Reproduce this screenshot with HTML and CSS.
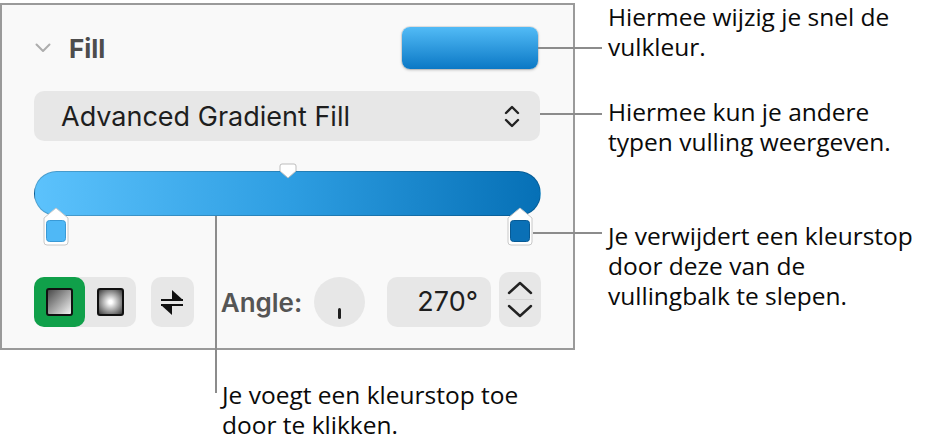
FILE: index.html
```html
<!DOCTYPE html>
<html lang="nl">
<head>
  <meta charset="utf-8">
  <title>Vulling</title>
  <link rel="stylesheet" href="styles.css">
</head>
<body>
  <div class="page">
    <div class="left">
      <div class="panel">
        <div class="fill-head">
          <div class="fill-title">
            <svg class="chev-down" width="16" height="10" viewBox="0 0 16 10"><path d="M1.5 1.5 L8 8 L14.5 1.5" fill="none" stroke="#adadad" stroke-width="2" stroke-linecap="round" stroke-linejoin="round"/></svg>
            <span>Fill</span>
          </div>
          <div class="swatch"></div>
        </div>

        <div class="popup">
          <span>Advanced Gradient Fill</span>
          <svg width="16" height="23" viewBox="0 0 16 23"><path d="M2 8 L8 2 L14 8 M2 15 L8 21 L14 15" fill="none" stroke="#222" stroke-width="2.4" stroke-linecap="round" stroke-linejoin="round"/></svg>
        </div>

        <div class="gradient">
          <div class="bar"></div>
          <svg class="midpoint" width="18" height="16" viewBox="0 0 18 16"><path d="M3 1 H15 Q17 1 17 3 V8 L9 15 L1 8 V3 Q1 1 3 1 Z" fill="#fff" stroke="#bdbdbd" stroke-width="1"/></svg>
          <svg class="stop stop-left" width="26" height="39" viewBox="0 0 26 39"><path d="M13 1 L25 11 V35 Q25 38 22 38 H4 Q1 38 1 35 V11 Z" fill="#fff" stroke="#c8c8c8"/><rect x="3.5" y="13.5" width="19" height="21" rx="3" fill="#4fb8f6" stroke="#3a9ad6"/></svg>
          <svg class="stop stop-right" width="26" height="39" viewBox="0 0 26 39"><path d="M13 1 L25 11 V35 Q25 38 22 38 H4 Q1 38 1 35 V11 Z" fill="#fff" stroke="#c8c8c8"/><rect x="3.5" y="13.5" width="19" height="21" rx="3" fill="#0a70b6" stroke="#085a94"/></svg>
        </div>

        <div class="controls">
          <div class="segment">
            <div class="seg seg-on"><span class="sq sq-linear"></span></div>
            <div class="seg"><span class="sq sq-radial"></span></div>
          </div>
          <div class="swap">
            <svg width="26" height="28" viewBox="0 0 26 28"><path d="M2 12 H24" stroke="#111" stroke-width="2"/><path d="M13 2 V12 H24 Z" fill="#111"/><path d="M2 17 H24" stroke="#111" stroke-width="2"/><path d="M13 27 V17 H2 Z" fill="#111"/></svg>
          </div>
          <span class="angle-label">Angle:</span>
          <div class="dial"><span class="tick"></span></div>
          <div class="value">270°</div>
          <div class="stepper">
            <svg width="42" height="55" viewBox="0 0 42 55"><path d="M10 21 L21 11 L32 21" fill="none" stroke="#222" stroke-width="2.4" stroke-linecap="round" stroke-linejoin="round"/><path d="M7 27.5 H35" stroke="#d6d6d6" stroke-width="1"/><path d="M10 34 L21 44 L32 34" fill="none" stroke="#222" stroke-width="2.4" stroke-linecap="round" stroke-linejoin="round"/></svg>
          </div>
        </div>
      </div>
      <p class="note note-bottom">Je voegt een kleurstop toe<br>door te klikken.</p>
    </div>

    <div class="notes">
      <p class="note note-1">Hiermee wijzig je snel de<br>vulkleur.</p>
      <p class="note note-2">Hiermee kun je andere<br>typen vulling weergeven.</p>
      <p class="note note-3">Je verwijdert een kleurstop<br>door deze van de<br>vullingbalk te slepen.</p>
    </div>

    <span class="leader leader-swatch"></span>
    <span class="leader leader-popup"></span>
    <span class="leader leader-stop"></span>
    <span class="leader leader-add"></span>
  </div>
</body>
</html>
```

FILE: styles.css
```css
body {
  margin: 0;
  background: #fff;
}
.page {
  position: relative;
  display: flex;
  width: 944px;
  height: 447px;
  overflow: hidden;
}
.left {
  width: 575px;
  flex: none;
}
.panel {
  box-sizing: border-box;
  width: 575px;
  height: 347px;
  margin-top: 3px;
  padding: 22px 32px 21px 32px;
  border: 2px solid #9a9a9a;
  background: #f9f9f9;
  font-family: Inter, "Liberation Sans", sans-serif;
  color: #1e1e1e;
  display: flex;
  flex-direction: column;
}

/* header */
.fill-head {
  height: 42px;
  display: flex;
  align-items: center;
  justify-content: space-between;
}
.fill-title {
  display: flex;
  align-items: center;
  font-size: 26px;
  font-weight: 700;
  color: #4d4d4d;
}
.chev-down {
  margin-left: 1px;
  margin-right: 18px;
}
.swatch {
  width: 136px;
  height: 42px;
  margin-right: 3px;
  border-radius: 8px;
  background: linear-gradient(to bottom, #52bbf6, #0b78c5);
  box-shadow: 0 0 0 1px rgba(0, 0, 0, 0.08), 0 1px 3px rgba(0, 0, 0, 0.25);
}

/* popup */
.popup {
  margin-top: 22px;
  margin-right: 1px;
  height: 50px;
  padding: 0 20px 0 27px;
  border-radius: 10px;
  background: #e7e7e7;
  display: flex;
  align-items: center;
  justify-content: space-between;
  font-size: 27px;
}

/* gradient bar */
.gradient {
  position: relative;
  margin-top: 22px;
  height: 82px;
}
.bar {
  margin-top: 8px;
  height: 45px;
  width: 507px;
  box-sizing: border-box;
  border-radius: 23px;
  border: 1px solid rgba(0, 0, 0, 0.18);
  background: linear-gradient(to right, #5cc2fc, #2e9ee2 50%, #0670b6);
}
.midpoint {
  position: absolute;
  left: 245px;
  top: 0;
}
.stop {
  position: absolute;
  top: 44px;
}
.stop-left {
  left: 9px;
}
.stop-right {
  left: 473px;
}

/* bottom controls */
.controls {
  margin-top: 32px;
  height: 50px;
  display: flex;
  align-items: flex-end;
}
.segment {
  display: flex;
  width: 103px;
  height: 50px;
  border-radius: 10px;
  background: #e7e7e7;
}
.seg {
  width: 51px;
  height: 50px;
  border-radius: 10px;
  display: flex;
  align-items: center;
  justify-content: center;
}
.seg-on {
  background: #10a04a;
}
.sq {
  box-sizing: border-box;
  width: 27px;
  height: 28px;
  border: 2.5px solid #111;
  border-radius: 3px;
}
.sq-linear {
  background: linear-gradient(135deg, #4a4a4a, #f4f4f4);
}
.sq-radial {
  background: radial-gradient(circle, #fff 10%, #3c3c3c 100%);
}
.swap {
  margin-left: 15px;
  width: 43px;
  height: 50px;
  border-radius: 10px;
  background: #e7e7e7;
  display: flex;
  align-items: center;
  justify-content: center;
}
.angle-label {
  margin-left: 27px;
  align-self: center;
  font-size: 26px;
  font-weight: 600;
  color: #555;
}
.dial {
  position: relative;
  margin-left: 12px;
  width: 51px;
  height: 50px;
  border-radius: 50%;
  background: #e7e7e7;
}
.tick {
  position: absolute;
  left: 24px;
  top: 31px;
  width: 3px;
  height: 11px;
  border-radius: 2px;
  background: #1e1e1e;
}
.value {
  box-sizing: border-box;
  margin-left: 22px;
  width: 105px;
  height: 50px;
  padding-right: 13px;
  border-radius: 10px;
  background: #e7e7e7;
  font-size: 27px;
  line-height: 50px;
  text-align: right;
}
.stepper {
  margin-left: 8px;
  width: 42px;
  height: 55px;
  border-radius: 10px;
  background: #e7e7e7;
}
.stepper svg {
  display: block;
}

/* callouts */
.notes {
  padding-left: 33px;
}
.note {
  margin: 0;
  font-family: "Open Sans", "Noto Sans", sans-serif;
  font-size: 24.5px;
  line-height: 30px;
  color: #0a0a0a;
}
.note-1 {
  margin-top: 2px;
}
.note-2 {
  margin-top: 35px;
}
.note-3 {
  margin-top: 64px;
}
.note-bottom {
  margin-top: 30px;
  margin-left: 222px;
}
.leader {
  position: absolute;
  background: #8c8c8c;
}
.leader-swatch {
  left: 538px;
  top: 47px;
  width: 64px;
  height: 2px;
}
.leader-popup {
  left: 540px;
  top: 113px;
  width: 62px;
  height: 2px;
}
.leader-stop {
  left: 533px;
  top: 232px;
  width: 69px;
  height: 2px;
}
.leader-add {
  left: 215px;
  top: 216px;
  width: 2px;
  height: 177px;
}
```
